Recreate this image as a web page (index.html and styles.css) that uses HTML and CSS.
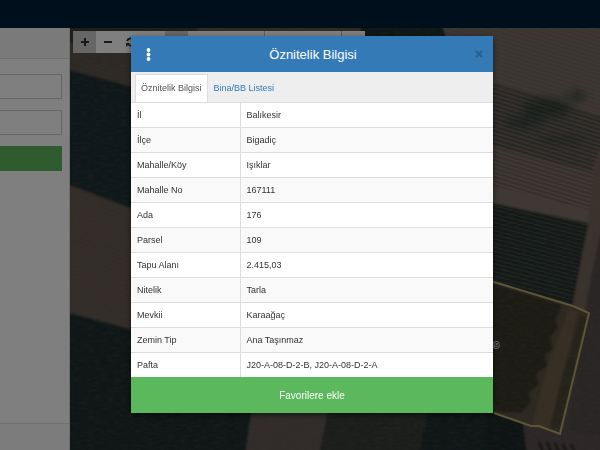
FILE: index.html
```
<!DOCTYPE html>
<html lang="tr">
<head>
    <meta charset="UTF-8">
    <meta name="viewport" content="width=device-width, initial-scale=1.0">
    <title>Öznitelik Bilgisi</title>
    <link rel="stylesheet" href="styles.css">
</head>
<body>
    <div class="page">
        <header class="navbar"></header>
        <div class="content">
            <aside class="sidebar">
                <div class="sidebar-heading"></div>
                <form class="search-form">
                    <input type="text" class="form-control" aria-label="Ada">
                    <input type="text" class="form-control" aria-label="Parsel">
                    <button type="button" class="btn-search" aria-label="Sorgula"></button>
                </form>
                <div class="sidebar-footer"></div>
            </aside>
            <main class="map">
                <svg class="map-image" viewBox="69 28 531 422" preserveAspectRatio="xMinYMin slice" aria-hidden="true">
                    <defs>
                        <pattern id="furrow" width="9" height="4" patternUnits="userSpaceOnUse" patternTransform="rotate(17)">
                            <rect width="9" height="2" fill="#1c2420" opacity="0.2"/>
                        </pattern>
                        <pattern id="dashes" width="9" height="4" patternUnits="userSpaceOnUse" patternTransform="rotate(14)">
                            <rect width="9" height="1" fill="#9a8d80" opacity="0.25"/>
                        </pattern>
                        <pattern id="columns" width="4" height="9" patternUnits="userSpaceOnUse" patternTransform="rotate(14)">
                            <rect width="2" height="9" fill="#2c2828" opacity="0.25"/>
                        </pattern>
                        <filter id="soft"><feGaussianBlur stdDeviation="1"/></filter>
                        <filter id="patches" x="-20%" y="-50%" width="140%" height="200%"><feGaussianBlur stdDeviation="5"/></filter>
                        <filter id="grain" x="0" y="0" width="100%" height="100%">
                            <feTurbulence type="fractalNoise" baseFrequency="0.15 0.4" numOctaves="3" seed="4"/>
                            <feColorMatrix values="0 0 0 0 0.2  0 0 0 0 0.18  0 0 0 0 0.16  0.6 0 0 0 -0.2"/>
                        </filter>
                    </defs>
                    <rect x="69" y="28" width="531" height="422" fill="#1e2c2d"/>
                    <g filter="url(#soft)">
                        <!-- fields on the left -->
                        <path d="M60 20H360V60L135 88L60 68Z" fill="#62584f"/>
                        <path d="M60 20H200L190 50L60 42Z" fill="#3c4036"/>
                        <path d="M60 20H360V60L135 88L60 68Z" fill="url(#furrow)"/>
                        <path d="M60 70L140 90V210L60 185Z" fill="#1e2e30"/>
                        <path d="M60 182L140 212V332L60 311Z" fill="#6e6057"/>
                        <path d="M60 182L140 212V332L60 311Z" fill="url(#furrow)"/>
                        <path d="M251 405H330L318 455H244Z" fill="#625855"/>
                        <path d="M328 405H428L418 455H318Z" fill="#363b36"/>
                        <!-- fields on the right -->
                        <path d="M440 20H610V300L490 210Z" fill="#7e7068"/>
                        <path d="M440 20H610V120L490 84Z" fill="#7c7068"/>
                        <path d="M485 83L610 122L590 172L485 144Z" fill="#6c645c"/>
                    </g>
                    <g filter="url(#patches)">
                        <ellipse cx="545" cy="108" rx="24" ry="10" fill="#3a4841"/>
                        <ellipse cx="523" cy="122" rx="20" ry="7" fill="#434e46"/>
                        <ellipse cx="575" cy="96" rx="10" ry="6" fill="#464e48"/>
                        <ellipse cx="560" cy="140" rx="26" ry="5" fill="#4c524c"/>
                    </g>
                    <path d="M485 83L610 122L590 210L485 184Z" fill="url(#furrow)"/>
                    <path d="M485 83L610 122L590 172L485 144Z" fill="url(#furrow)"/>
                    <path d="M440 28H600V120L490 84Z" fill="url(#furrow)" opacity="0.4"/>
                    <path d="M493 84L600 118" stroke="#332f2c" stroke-width="2" opacity="0.6" filter="url(#soft)"/>
                    <g filter="url(#soft)">
                        <path d="M485 202L590 224L574 312L485 284Z" fill="#26332f"/>
                        <path d="M588 226L610 205V455H545Z" fill="#5a5050"/>
                        <path d="M598 236L610 232V440H565Z" fill="url(#columns)"/>
                        <path d="M600 155L593 172L587 225L572 303L548 370L530 455H545L560 405L575 365L584 308L597 242L610 200V150Z" fill="#75655a"/>
                        <path d="M485 409L522 422L528 455H485Z" fill="#1a2626"/>
                        <path d="M522 424L560 430L610 437V455H526Z" fill="#5a5050"/>
                        <path d="M538 442l4 10M546 442l4 10M554 443l4 10M562 444l4 10M570 444l4 10" stroke="#25272a" stroke-width="3"/>
                    </g>
                    <path d="M485 202L587 224L572 304L485 282Z" fill="url(#dashes)"/>
                    <!-- selected parcel -->
                    <path d="M470 275L572 306L588 313L559 434L538 426L530 426L493 413Z" fill="#5a5140"/>
                    <g filter="url(#soft)">
                        <path d="M470 277L561 305L555 318L557 328L548 338L552 348L544 356L546 366L535 374L538 384L528 392L530 402L520 413L493 411Z" fill="#39372a"/>
                        <path d="M580 315L586 318L558 428L549 427L557 390Z" fill="#4a4433"/>
                        <path d="M568 309L577 311L563 369L549 427H531L545 371Z" fill="#6e5d47"/>
                    </g>
                    <rect x="69" y="28" width="531" height="422" filter="url(#grain)" opacity="0.5"/>
                    <path d="M470 275L572 306L588 313L559 434L538 426L530 426L493 413" fill="none" stroke="#b9ab6c" stroke-width="2"/>
                    <text x="498" y="348" text-anchor="end" class="parcel-label">109</text>
                </svg>
                <div class="map-toolbar">
                    <button type="button" class="tool active" aria-label="Yakınlaş">
                        <svg viewBox="0 0 12 12"><path d="M2 6h8M6 2v8" stroke="#333" stroke-width="2"/></svg>
                    </button>
                    <button type="button" class="tool" aria-label="Uzaklaş">
                        <svg viewBox="0 0 12 12"><path d="M2 6h8" stroke="#333" stroke-width="2"/></svg>
                    </button>
                    <button type="button" class="tool" aria-label="Yenile">
                        <svg viewBox="0 0 12 12"><path d="M2 5a4 4 0 0 1 7-1M10 7a4 4 0 0 1-7 1" fill="none" stroke="#333" stroke-width="2"/><path d="M11 1v4H7zM1 11V7h4z" fill="#333"/></svg>
                    </button>
                    <button type="button" class="tool" aria-label="Konum"></button>
                    <button type="button" class="tool active" aria-label="Seç"></button>
                    <span class="tool-field"></span>
                    <span class="tool-field"></span>
                    <span class="tool"></span>
                </div>
            </main>
        </div>
    </div>

    <div class="overlay">
        <div class="modal" role="dialog" aria-labelledby="modalTitle">
            <div class="modal-header">
                <button type="button" class="btn-menu" aria-label="Menü">
                    <svg viewBox="0 0 5 13"><circle cx="2.5" cy="2" r="1.9"/><circle cx="2.5" cy="6.5" r="1.9"/><circle cx="2.5" cy="11" r="1.9"/></svg>
                </button>
                <h4 id="modalTitle">Öznitelik Bilgisi</h4>
                <button type="button" class="btn-close" aria-label="Kapat">
                    <svg viewBox="0 0 8 8"><path d="M1 1l6 6M7 1L1 7"/></svg>
                </button>
            </div>
            <nav class="tabs">
                <a href="#oznitelik" class="tab active">Öznitelik Bilgisi</a>
                <a href="#bina" class="tab">Bina/BB Listesi</a>
            </nav>
            <table class="info-table" id="oznitelik">
                <tbody>
                    <tr><th scope="row">İl</th><td>Balıkesir</td></tr>
                    <tr><th scope="row">İlçe</th><td>Bigadiç</td></tr>
                    <tr><th scope="row">Mahalle/Köy</th><td>Işıklar</td></tr>
                    <tr><th scope="row">Mahalle No</th><td>167111</td></tr>
                    <tr><th scope="row">Ada</th><td>176</td></tr>
                    <tr><th scope="row">Parsel</th><td>109</td></tr>
                    <tr><th scope="row">Tapu Alanı</th><td>2.415,03</td></tr>
                    <tr><th scope="row">Nitelik</th><td>Tarla</td></tr>
                    <tr><th scope="row">Mevkii</th><td>Karaağaç</td></tr>
                    <tr><th scope="row">Zemin Tip</th><td>Ana Taşınmaz</td></tr>
                    <tr><th scope="row">Pafta</th><td>J20-A-08-D-2-B, J20-A-08-D-2-A</td></tr>
                </tbody>
            </table>
            <button type="button" class="btn-favorite">Favorilere ekle</button>
        </div>
    </div>
</body>
</html>
```
FILE: styles.css
```
* {
    box-sizing: border-box;
}
body {
    margin: 0;
    font-family: "Liberation Sans", Arial, sans-serif;
    font-size: 9px;
    color: #333;
}
button {
    border: none;
    padding: 0;
    font-family: inherit;
    cursor: pointer;
}
.page {
    display: flex;
    flex-direction: column;
    height: 100vh;
    overflow: hidden;
}
.navbar {
    flex: none;
    height: 28px;
    background-color: #001e38;
}
.content {
    display: flex;
    flex: 1;
    min-height: 0;
}

/* left panel */
.sidebar {
    display: flex;
    flex-direction: column;
    flex: none;
    width: 70px;
    background-color: #fff;
    border-right: 1px solid #ddd;
}
.sidebar-heading {
    height: 31px;
    background-color: #f5f5f5;
    border-bottom: 1px solid #ddd;
}
.search-form {
    display: flex;
    flex: 1;
    flex-direction: column;
    gap: 11px;
    padding: 15px 7px 0 0;
}
.form-control {
    width: 100%;
    height: 25px;
    background-color: #fff;
    border: 1px solid #ccc;
    border-left: none;
}
.btn-search {
    height: 25px;
    background-color: #5cb85c;
}
.sidebar-footer {
    height: 27px;
    background-color: #f9f9f9;
    border-top: 1px solid #ddd;
}

/* map */
.map {
    position: relative;
    flex: 1;
    min-width: 0;
    background-color: #20302f;
}
.map-image {
    display: block;
    width: 100%;
    height: 100%;
}
.parcel-label {
    font-size: 9px;
    fill: #222;
    stroke: #ccc;
    stroke-width: 2px;
    paint-order: stroke;
}
.map-toolbar {
    position: absolute;
    top: 3px;
    left: 3px;
    display: flex;
}
.tool {
    display: flex;
    align-items: center;
    justify-content: center;
    width: 23px;
    height: 22px;
    background-color: #fff;
}
.tool.active {
    background-color: #ccc;
}
.tool svg {
    width: 12px;
    height: 12px;
}
.tool-field {
    width: 77px;
    height: 22px;
    background-color: #fff;
    border-right: 1px solid #bbb;
}

/* modal */
.overlay {
    position: fixed;
    inset: 0;
    display: flex;
    align-items: flex-start;
    justify-content: center;
    padding: 36px 0 0 24px;
    background-color: rgba(0, 0, 0, 0.5);
}
.modal {
    width: 90%;
    max-width: 362px;
    background-color: #fff;
    box-shadow: 0 2px 6px rgba(0, 0, 0, 0.5);
}
.modal-header {
    display: flex;
    align-items: center;
    justify-content: space-between;
    height: 36px;
    padding: 0 10px 0 15px;
    background-color: #337ab7;
    color: #fff;
}
.modal-header h4 {
    margin: 0;
    font-size: 13px;
    font-weight: normal;
}
.btn-menu,
.btn-close {
    display: flex;
    background: none;
}
.btn-menu svg {
    width: 5px;
    height: 13px;
    fill: #fff;
}
.btn-close svg {
    width: 8px;
    height: 8px;
    stroke: #29608f;
    stroke-width: 2;
}
.tabs {
    display: flex;
    align-items: flex-end;
    height: 31px;
    padding: 0 4px;
    background-color: #eee;
    border-bottom: 1px solid #ddd;
}
.tab {
    height: 28px;
    padding: 0 5px;
    border: 1px solid transparent;
    border-bottom: none;
    line-height: 26px;
    color: #337ab7;
    text-decoration: none;
}
.tab.active {
    background-color: #fff;
    border-color: #ddd;
    color: #555;
}
.info-table {
    width: 100%;
    border-collapse: collapse;
    table-layout: fixed;
}
.info-table th,
.info-table td {
    height: 25px;
    padding: 0 6px;
    border-top: 1px solid #ddd;
    font-weight: normal;
    text-align: left;
}
.info-table th {
    width: 109px;
    border-right: 1px solid #ddd;
}
.info-table tr:first-child th,
.info-table tr:first-child td {
    height: 24px;
    border-top: none;
}
.info-table tr:nth-child(even) {
    background-color: #f9f9f9;
}
.btn-favorite {
    display: block;
    width: 100%;
    height: 36px;
    background-color: #5cb85c;
    color: #fff;
    font-size: 10px;
}
```
